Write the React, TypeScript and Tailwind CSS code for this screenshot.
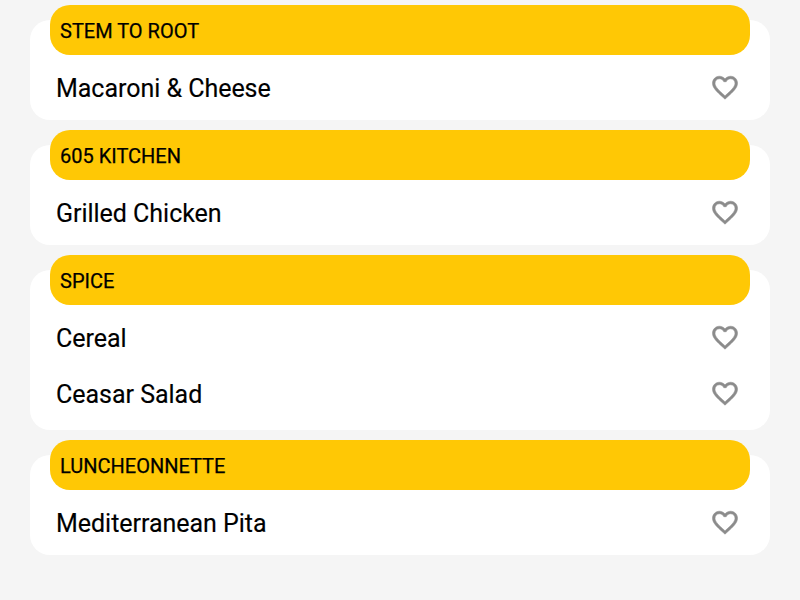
const stations = [
  { name: "STEM TO ROOT", items: ["Macaroni & Cheese"] },
  { name: "605 KITCHEN", items: ["Grilled Chicken"] },
  { name: "SPICE", items: ["Cereal", "Ceasar Salad"] },
  { name: "LUNCHEONNETTE", items: ["Mediterranean Pita"] },
];

function Heart() {
  return (
    <svg
      viewBox="0 0 24 24"
      className="size-[30px] -translate-y-[0.5px] fill-[#8b8b8b] stroke-[#8b8b8b] stroke-[0.45]"
      aria-hidden="true"
    >
      <path d="M16.5 3c-1.74 0-3.41.81-4.5 2.09C10.91 3.81 9.24 3 7.5 3 4.42 3 2 5.42 2 8.5c0 3.78 3.4 6.86 8.55 11.54L12 21.35l1.45-1.32C18.6 15.36 22 12.28 22 8.5 22 5.42 19.58 3 16.5 3zm-4.4 15.55l-.1.1-.1-.1C7.14 14.24 4 11.39 4 8.5 4 6.5 5.5 5 7.5 5c1.54 0 3.04.99 3.57 2.36h1.87C13.46 5.99 14.96 5 16.5 5c2 0 3.5 1.5 3.5 3.5 0 2.89-3.14 5.74-7.9 10.05z" />
    </svg>
  );
}

function MenuItem({ label }: { label: string }) {
  return (
    <li className="flex h-14 items-center justify-between">
      <span className="text-[25px] leading-none tracking-[-0.025px] [-webkit-text-stroke:0.15px_black]">{label}</span>
      <Heart />
    </li>
  );
}

function Station({ name, items }: { name: string; items: string[] }) {
  return (
    <section className="rounded-[20px] bg-white" style={{ paddingBottom: items.length * 4 }}>
      <h2 className="mx-5 -mt-[15px] flex h-[50px] items-center rounded-[20px] bg-[#ffc805] px-2.5 pt-0.5 text-[20px] leading-none font-normal [-webkit-text-stroke:0.25px_black]">
        {name}
      </h2>
      <ul className="pr-[30px] pl-[26px] pt-[5px]">
        {items.map((item) => (
          <MenuItem key={item} label={item} />
        ))}
      </ul>
    </section>
  );
}

export default function App() {
  return (
    <main className="flex h-screen flex-col gap-[25px] overflow-hidden bg-[#f5f5f5] px-[30px] pt-5 font-[Roboto,sans-serif] text-black">
      {stations.map((s) => (
        <Station key={s.name} {...s} />
      ))}
    </main>
  );
}
